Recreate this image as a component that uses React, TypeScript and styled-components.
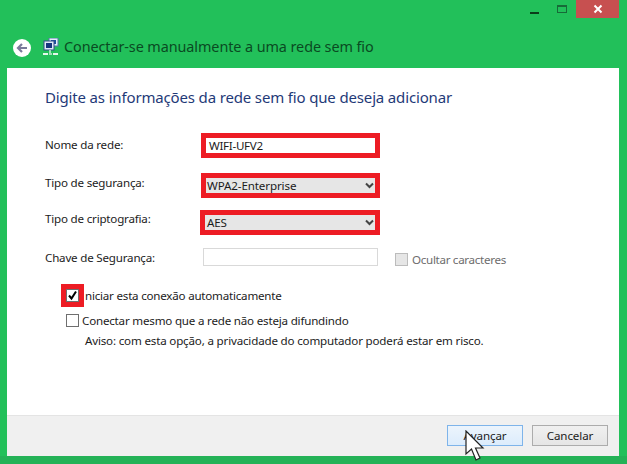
import React from "react";
import styled, { createGlobalStyle } from "styled-components";

const Global = createGlobalStyle`
  html, body { margin: 0; padding: 0; width: 627px; height: 464px; overflow: hidden; background: #22c05a; }
  body { font-family: "Noto Sans", "Open Sans", sans-serif; }
`;
const Win = styled.div`
  width: 627px; height: 464px; background: #22c05a; display: flex; flex-direction: column; position: relative;
`;
const Caption = styled.div`
  height: 18px; display: flex; justify-content: flex-end; padding-right: 8px;
`;
const CapBtn = styled.div<{ $w: number }>`
  width: ${p => p.$w}px; height: 18px; display: flex; align-items: center; justify-content: center;
`;
const CloseBtn = styled(CapBtn)`
  background: #c75050;
`;
const MinGlyph = styled.svg`
  margin-top: 6px;
`;
const Header = styled.div`
  height: 50px; box-sizing: border-box; padding: 20px 0 0 12px; display: flex; align-items: flex-start;
`;
const BackIcon = styled.svg`
  flex: none;
`;
const NetIcon = styled.svg`
  flex: none; margin-left: 11px;
`;
const HeaderTitle = styled.div`
  margin-left: 5px; font-size: 14.4px; line-height: 18px; color: #0a4a22; letter-spacing: -0.08px; white-space: nowrap;
`;
const Body = styled.div`
  margin: 0 8px 0 7px; height: 388px; display: flex; flex-direction: column; background: #fff;
`;
const BottomEdge = styled.div`
  flex: 1; background: #24b257;
`;
const Content = styled.div`
  flex: 1; box-sizing: border-box; padding: 19px 0 0 38px;
`;
const Heading = styled.div`
  font-size: 15px; line-height: 20px; color: #1f3a78; letter-spacing: -0.155px; white-space: nowrap; margin-bottom: 18px;
`;
const Form = styled.div`
  display: grid; grid-template-columns: 155px 180px auto; grid-template-rows: 41px 39px 35px 33px; align-items: center;
`;
const Label = styled.div<{ $up: number }>`
  font-size: 11.6px; color: #1c1c1c; line-height: 16px; letter-spacing: -0.2px; white-space: nowrap;
  margin-bottom: ${p => Math.max(p.$up, 0) * 2}px;
  margin-top: ${p => Math.max(-p.$up, 0) * 2}px;
`;
const RedField = styled.div<{ $wide?: boolean }>`
  box-sizing: border-box; height: 25px; width: ${p => (p.$wide ? 180 : 179)}px; margin-left: ${p => (p.$wide ? 0 : 1)}px;
  border: 5px solid #ed1c24; display: flex; align-items: center;
  font-size: 11.6px; color: #1c1c1c; letter-spacing: -0.12px;
`;
const TextField = styled(RedField)`
  background: #fff; padding-left: 3px; letter-spacing: -0.3px;
`;
const SelectField = styled(RedField)`
  background: #e6e6e6; padding-left: ${p => (p.$wide ? 2 : 1)}px; justify-content: space-between; padding-right: 1px;
`;
const EmptyField = styled.div`
  box-sizing: border-box; width: 175px; height: 18px; border: 1px solid #d9d9d9; margin-left: 3px; background: #fff;
`;
const HideCell = styled.div`
  display: flex; align-items: center; gap: 4px; margin-left: 15px; margin-top: 5px; font-size: 11.6px; color: #6d6d6d; letter-spacing: -0.3px; white-space: nowrap;
`;
const DisabledBox = styled.div`
  box-sizing: border-box; width: 13px; height: 13px; border: 1px solid #bcbcbc; background: #e6e6e6;
`;
const Options = styled.div`
  margin-left: 16px; margin-top: 10px; display: flex; flex-direction: column;
`;
const OptRow = styled.div<{ $tight?: number }>`
  height: 25px; display: flex; align-items: center; font-size: 11.6px; color: #1c1c1c; letter-spacing: ${p => p.$tight ?? -0.2}px; white-space: nowrap;
`;
const RedBox = styled.div`
  box-sizing: border-box; width: 23px; height: 23px; background: #ed1c24; display: flex; align-items: center; justify-content: center; margin-right: 1px;
`;
const CheckBox = styled.div`
  box-sizing: border-box; width: 13px; height: 13px; border: 1px solid #6f6f6f; background: #fff; display: flex; align-items: center; justify-content: center;
`;
const PlainCheck = styled(CheckBox)`
  margin-left: 5px; margin-right: 3px;
`;
const Note = styled.div`
  margin-left: 24px; font-size: 11.6px; line-height: 16px; color: #1c1c1c; letter-spacing: -0.18px; white-space: nowrap;
`;
const Footer = styled.div`
  height: 41px; box-sizing: border-box; background: #f0f0f0; border-top: 1px solid #e4e4e4; display: flex; justify-content: flex-end; align-items: flex-start; gap: 9px; padding: 9px 11px 0 0;
`;
const Btn = styled.div`
  box-sizing: border-box; width: 76px; height: 21px; border: 1px solid #acacac; background: linear-gradient(#f0f0f0, #e5e5e5);
  font-size: 11.6px; color: #1c1c1c; display: flex; align-items: center; justify-content: center; letter-spacing: -0.1px;
`;
const PrimaryBtn = styled(Btn)`
  border-color: #7eb4ea; background: linear-gradient(#ecf4fc, #dcecfc);
`;
const Cursor = styled.svg`
  position: absolute; left: 465px; top: 430px;
`;

const Chevron = () => (
  <svg width="9" height="7" viewBox="0 0 9 7"><path d="M1 1.5 L4.5 5 L8 1.5" fill="none" stroke="#444" strokeWidth="2" /></svg>
);

export default function App() {
  return (
    <Win>
      <Global />
      <Caption>
        <CapBtn $w={27}>
          <MinGlyph width="9" height="3"><rect width="9" height="2" y="1" fill="#0b3d1a" /></MinGlyph>
        </CapBtn>
        <CapBtn $w={28}>
          <svg width="11" height="9"><rect x="0.5" y="0.5" width="9" height="7" fill="none" stroke="#176a38" /><rect x="0" y="0" width="10" height="2" fill="#176a38" /></svg>
        </CapBtn>
        <CloseBtn $w={43}>
          <svg width="10" height="10" viewBox="0 0 10 10"><path d="M1.5 1.5 L8.5 8.5 M8.5 1.5 L1.5 8.5" stroke="#fff" strokeWidth="2" /></svg>
        </CloseBtn>
      </Caption>
      <Header>
        <BackIcon width="20" height="20" viewBox="0 0 20 20">
          <circle cx="10" cy="10" r="9" fill="#fff" />
          <path d="M15 10 H6 M10 6 L6 10 L10 14" fill="none" stroke="#7a7a9a" strokeWidth="2.2" />
        </BackIcon>
        <NetIcon width="16" height="18" viewBox="0 0 16 18">
          <rect x="6" y="0" width="9" height="8" fill="#e6f0fa" stroke="#5577aa" />
          <rect x="8" y="2" width="5" height="4" fill="#1b4fa0" />
          <rect x="1" y="3" width="10" height="9" fill="#dfeaf6" stroke="#334e88" />
          <rect x="3" y="5" width="6" height="5" fill="#15357e" />
          <path d="M7 12 V15" stroke="#c9f0d5" strokeWidth="1.5" />
          <rect x="0" y="15" width="5" height="2" fill="#e4f6ea" />
          <rect x="6" y="15" width="3" height="2" fill="#9fe0b6" />
          <rect x="10" y="15" width="5" height="2" fill="#e4f6ea" />
        </NetIcon>
        <HeaderTitle>Conectar-se manualmente a uma rede sem fio</HeaderTitle>
      </Header>
      <Body>
        <Content>
          <Heading>Digite as informações da rede sem fio que deseja adicionar</Heading>
          <Form>
            <Label $up={1}>Nome da rede:</Label>
            <TextField>WIFI-UFV2</TextField>
            <span />
            <Label $up={3}>Tipo de segurança:</Label>
            <SelectField>WPA2-Enterprise<Chevron /></SelectField>
            <span />
            <Label $up={4}>Tipo de criptografia:</Label>
            <SelectField $wide>AES<Chevron /></SelectField>
            <span />
            <Label $up={-1}>Chave de Segurança:</Label>
            <EmptyField />
            <HideCell><DisabledBox />Ocultar caracteres</HideCell>
          </Form>
          <Options>
            <OptRow $tight={-0.22}>
              <RedBox>
                <CheckBox>
                  <svg width="11" height="11" viewBox="0 0 11 11"><path d="M2 5.5 L4.5 8.5 L9 1.5" fill="none" stroke="#000" strokeWidth="2" /></svg>
                </CheckBox>
              </RedBox>
              niciar esta conexão automaticamente
            </OptRow>
            <OptRow>
              <PlainCheck />
              Conectar mesmo que a rede não esteja difundindo
            </OptRow>
            <Note>Aviso: com esta opção, a privacidade do computador poderá estar em risco.</Note>
          </Options>
        </Content>
        <Footer>
          <PrimaryBtn>Avançar</PrimaryBtn>
          <Btn>Cancelar</Btn>
        </Footer>
      </Body>
      <BottomEdge />
      <Cursor width="22" height="33" viewBox="0 0 22 33">
        <path d="M1 1 L1 24 L6.5 19 L11 30 L15 28 L10.5 18 L18 18 Z" fill="#fff" stroke="#222" strokeWidth="1.2" />
      </Cursor>
    </Win>
  );
}
